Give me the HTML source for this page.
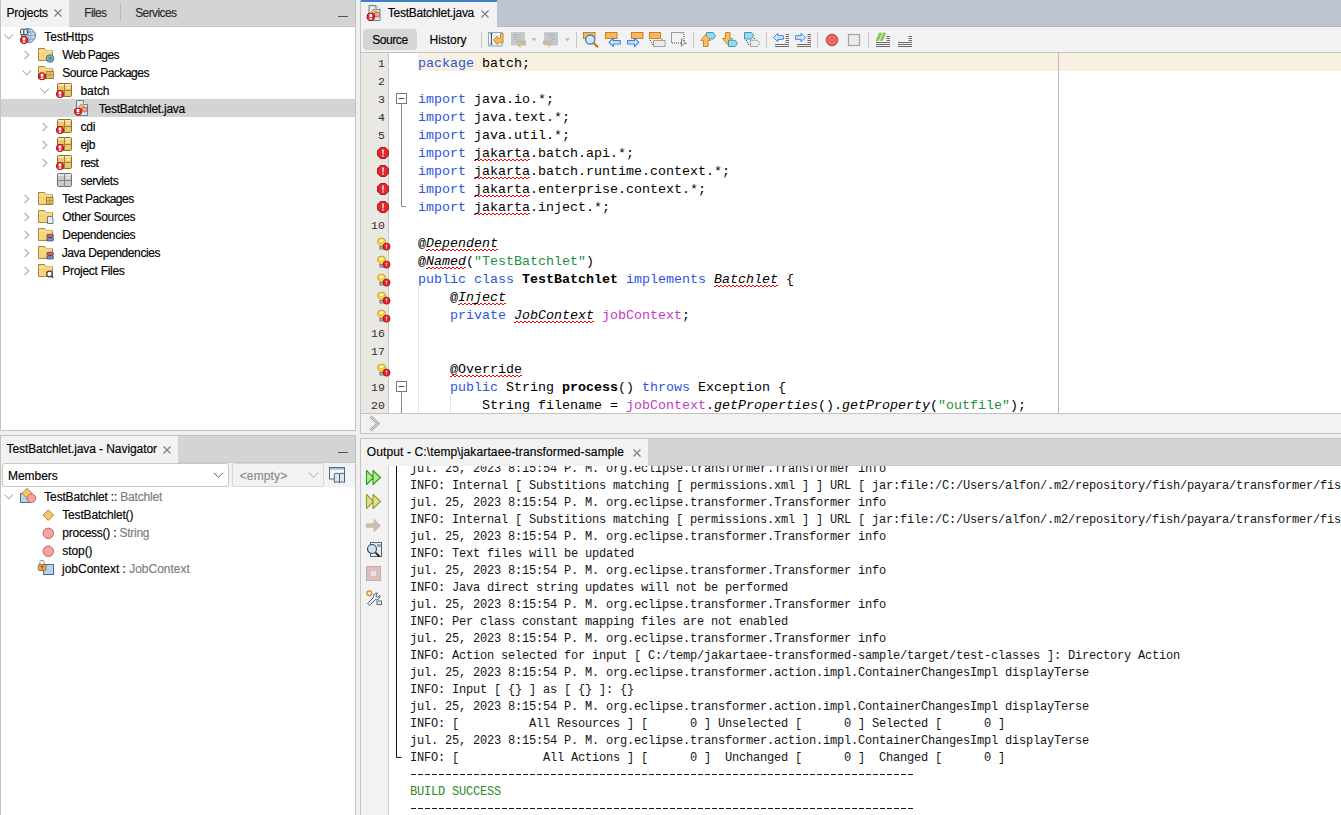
<!DOCTYPE html><html><head><meta charset="utf-8"><title>NetBeans</title><style>
*{box-sizing:border-box}
html,body{margin:0;padding:0}
body{width:1341px;height:815px;overflow:hidden;position:relative;background:#efefef;font-family:"Liberation Sans",sans-serif;font-size:12px;color:#000}
.a{position:absolute}
.t{position:absolute;white-space:pre}
.ss{-webkit-text-stroke:0.15px currentColor}
.k{color:#2c55e0}
.s{color:#1a9040}
.f{color:#c03cc0}
.i{font-style:italic}
.b{font-weight:bold}
.g{color:#7c7c7c}
.wv{position:absolute;height:2px;background-image:linear-gradient(to right,transparent 2px,#f00 2px),linear-gradient(to right,#f00 2px,transparent 2px);background-size:4px 1px,4px 1px;background-position:0 0,0 1px;background-repeat:repeat-x}
</style></head><body>

<svg width="0" height="0" style="position:absolute"><defs>
<symbol id="errb" viewBox="0 0 8 8"><path d="M2.4 0.4h3.2l2 2v3.2l-2 2H2.4l-2-2V2.4z" fill="#e0262c" stroke="#8e0a0e" stroke-width="0.8"/><rect x="2.7" y="1.5" width="2.6" height="3" fill="#fff"/><rect x="2.7" y="5.3" width="2.6" height="1.3" fill="#fff"/></symbol>
<symbol id="folder" viewBox="0 0 16 13"><path d="M0.5 0.5h6l1.5 2h6.5v10h-14z" fill="#f7d57c" stroke="#a98a3a" stroke-width="1"/><path d="M1 3h13.5" stroke="#fbe6a6" stroke-width="1"/></symbol>
<symbol id="pkg" viewBox="0 0 15 14"><rect x="0.5" y="0.5" width="14" height="13" rx="1.2" fill="#ecc66c" stroke="#8f6f28"/><path d="M7.5 0.5v13M0.5 7.5h14" stroke="#a4843a"/><rect x="1" y="1" width="6" height="2" fill="#f8e4ab"/><rect x="8" y="1" width="6" height="2" fill="#f8e4ab"/><rect x="9.5" y="3.8" width="3" height="1.6" fill="#fff6d8"/></symbol>
<symbol id="pkgg" viewBox="0 0 15 14"><rect x="0.5" y="0.5" width="14" height="13" rx="1.2" fill="#cacaca" stroke="#6f6f6f"/><path d="M7.5 0.5v13M0.5 7.5h14" stroke="#858585"/><rect x="1" y="1" width="6" height="2" fill="#e4e4e4"/><rect x="8" y="1" width="6" height="2" fill="#e4e4e4"/><rect x="9.5" y="3.8" width="3" height="1.6" fill="#f6f6f6"/></symbol>
<symbol id="jfile" viewBox="0 0 16 16"><path d="M2.5 0.5h7l4 4v11h-11z" fill="#dfe7ef" stroke="#6f7e8c"/><path d="M9.5 0.5v4h4" fill="#fff" stroke="#6f7e8c"/><path d="M7.5 4l2.5 2.5-2.5 2.5-2.5-2.5z" fill="#f1c35a" stroke="#a67b1e" stroke-width="0.8"/><circle cx="10.5" cy="9.5" r="2.6" fill="#f3a0a0" stroke="#c85050" stroke-width="0.8"/></symbol>
<symbol id="chevr" viewBox="0 0 6 10"><path d="M0.6 0.8L4.8 5L0.6 9.2" fill="none" stroke="#a9a9a9" stroke-width="1.1"/></symbol>
<symbol id="chevd" viewBox="0 0 10 6"><path d="M0.4 0.5L4.75 4.85L9.1 0.5" fill="none" stroke="#a9a9a9" stroke-width="1.05"/></symbol>
<symbol id="gerr" viewBox="0 0 12 12"><path d="M3.6 0.5h4.8l3.1 3.1v4.8l-3.1 3.1H3.6L0.5 8.4V3.6z" fill="#dd2a2f" stroke="#a31116" stroke-width="0.9"/><path d="M5.2 2.4h1.6l-0.3 5h-1z" fill="#fff"/><rect x="5.3" y="8.3" width="1.4" height="1.3" fill="#fff"/></symbol>
<symbol id="bulb" viewBox="0 0 14 14"><path d="M4.5 1a4 4 0 0 1 4 4c0 1.5-1 2.3-1.4 3.3v1.5H2.9V8.3C2.5 7.3 0.5 6.5 0.5 5a4 4 0 0 1 4-4z" fill="#f5d23c" stroke="#b8961a" stroke-width="0.8"/><ellipse cx="4.5" cy="3.8" rx="2" ry="1.3" fill="#fff7c8"/><rect x="3" y="9.8" width="3.2" height="2.2" fill="#dfe4ea" stroke="#3f5672" stroke-width="0.8"/><circle cx="9.5" cy="9.6" r="3.6" fill="#d9252a" stroke="#a51216" stroke-width="0.7"/><path d="M8.2 7.8h2.6l-0.9 1.4v2.3h-0.8V9.2z" fill="#f7c8c8"/></symbol>
</defs></svg>

<div class="a" style="left:0px;top:0px;width:356px;height:431px;background:#fff;"></div>
<div class="a" style="left:0px;top:0px;width:1px;height:431px;background:#c3c3c3;"></div>
<div class="a" style="left:355px;top:0px;width:1px;height:431px;background:#c3c3c3;"></div>
<div class="a" style="left:0px;top:430px;width:356px;height:1px;background:#c3c3c3;"></div>
<div class="a" style="left:1px;top:0px;width:354px;height:27px;background:#d4d4d4;"></div>
<div class="a" style="left:69px;top:26px;width:286px;height:1px;background:#c9c9c9;"></div>
<div class="a" style="left:1px;top:0px;width:68px;height:27px;background:#f2f2f2;"></div>
<div class="t" style="left:6.40px;top:3.54px;font-size:12px;line-height:18px;color:#000;font-family:'Liberation Sans',sans-serif;letter-spacing:-0.236px;-webkit-text-stroke:0.15px currentColor">Projects</div>
<svg class="a" style="left:54px;top:9px;overflow:visible" width="8" height="8" viewBox="0 0 8 8"><path d="M0.5 0.5L7.5 7.5M7.5 0.5L0.5 7.5" stroke="#7e7e7e" stroke-width="1.15"/></svg>
<div class="t" style="left:84.20px;top:3.54px;font-size:12px;line-height:18px;color:#2a2a2a;font-family:'Liberation Sans',sans-serif;letter-spacing:-0.635px;-webkit-text-stroke:0.15px currentColor">Files</div>
<div class="a" style="left:120px;top:3px;width:1px;height:18px;background:#bcbcbc;"></div>
<div class="t" style="left:135.20px;top:3.54px;font-size:12px;line-height:18px;color:#2a2a2a;font-family:'Liberation Sans',sans-serif;letter-spacing:-0.601px;-webkit-text-stroke:0.15px currentColor">Services</div>
<div class="a" style="left:338px;top:16px;width:10px;height:1px;background:#555;"></div>
<svg class="a" style="left:4px;top:34px;overflow:visible" width="10" height="6" viewBox="0 0 10 6"><use href="#chevd" x="0" y="0" width="10" height="6"/></svg>
<svg class="a" style="left:20px;top:28px;overflow:visible" width="17" height="17" viewBox="0 0 17 17"><circle cx="8.4" cy="7.6" r="7.1" fill="#c2daee" stroke="#4f7090" stroke-width="0.9"/><path d="M1.6 7.6h13.6M8.4 0.6v14M2.6 4h11.6M2.6 11.2h11.6M8.4 0.6c-3.2 3-3.2 11 0 14M8.4 0.6c3.2 3 3.2 11 0 14" stroke="#7d9db8" stroke-width="0.8" fill="none"/><rect x="0.6" y="1" width="3.4" height="5.8" rx="1.5" fill="#f4f8fc" stroke="#1e1e1e" stroke-width="0.9"/><rect x="3.9" y="1" width="3.4" height="5.8" rx="1.5" fill="#f4f8fc" stroke="#1e1e1e" stroke-width="0.9"/><use href="#errb" x="0" y="8" width="8" height="8"/></svg>
<div class="t" style="left:44.30px;top:27.54px;font-size:12px;line-height:18px;color:#000;font-family:'Liberation Sans',sans-serif;letter-spacing:-0.115px;-webkit-text-stroke:0.15px currentColor">TestHttps</div>
<svg class="a" style="left:24px;top:50px;overflow:visible" width="6" height="10" viewBox="0 0 6 10"><use href="#chevr" x="0" y="0" width="6" height="10"/></svg>
<svg class="a" style="left:38px;top:48px;overflow:visible" width="17" height="16" viewBox="0 0 17 16"><use href="#folder" x="0" y="0" width="16" height="13"/><circle cx="12" cy="10.5" r="3.8" fill="#7fa8cf" stroke="#3d6690" stroke-width="0.8"/><path d="M10.8 8.5l3.2 1.6-2.2 3z" fill="#33a033"/></svg>
<div class="t" style="left:62.30px;top:45.54px;font-size:12px;line-height:18px;color:#000;font-family:'Liberation Sans',sans-serif;letter-spacing:-0.577px;-webkit-text-stroke:0.15px currentColor">Web Pages</div>
<svg class="a" style="left:22px;top:70px;overflow:visible" width="10" height="6" viewBox="0 0 10 6"><use href="#chevd" x="0" y="0" width="10" height="6"/></svg>
<svg class="a" style="left:38px;top:66px;overflow:visible" width="17" height="16" viewBox="0 0 17 16"><use href="#folder" x="0" y="0" width="16" height="13"/><rect x="8.5" y="5.5" width="7" height="7" fill="#e8c36a" stroke="#94742c" stroke-width="0.8"/><path d="M12 5.5v7M8.5 9h7" stroke="#a5843a" stroke-width="0.7"/><use href="#errb" x="0" y="6.3" width="8" height="8"/></svg>
<div class="t" style="left:62.30px;top:63.54px;font-size:12px;line-height:18px;color:#000;font-family:'Liberation Sans',sans-serif;letter-spacing:-0.490px;-webkit-text-stroke:0.15px currentColor">Source Packages</div>
<svg class="a" style="left:40px;top:88px;overflow:visible" width="10" height="6" viewBox="0 0 10 6"><use href="#chevd" x="0" y="0" width="10" height="6"/></svg>
<svg class="a" style="left:57px;top:83px;overflow:visible" width="16" height="16" viewBox="0 0 16 16"><use href="#pkg" x="0" y="0" width="15" height="14"/><use href="#errb" x="-1" y="7" width="8" height="8"/></svg>
<div class="t" style="left:80.50px;top:81.54px;font-size:12px;line-height:18px;color:#000;font-family:'Liberation Sans',sans-serif;letter-spacing:-0.090px;-webkit-text-stroke:0.15px currentColor">batch</div>
<div class="a" style="left:1px;top:99px;width:354px;height:18px;background:#d4d4d4;"></div>
<svg class="a" style="left:74px;top:100px;overflow:visible" width="16" height="16" viewBox="0 0 16 16"><use href="#jfile" x="0" y="0" width="16" height="16"/><use href="#errb" x="0" y="7.5" width="8" height="8"/></svg>
<div class="t" style="left:98.80px;top:99.54px;font-size:12px;line-height:18px;color:#000;font-family:'Liberation Sans',sans-serif;letter-spacing:-0.270px;-webkit-text-stroke:0.15px currentColor">TestBatchlet.java</div>
<svg class="a" style="left:42px;top:122px;overflow:visible" width="6" height="10" viewBox="0 0 6 10"><use href="#chevr" x="0" y="0" width="6" height="10"/></svg>
<svg class="a" style="left:57px;top:119px;overflow:visible" width="16" height="16" viewBox="0 0 16 16"><use href="#pkg" x="0" y="0" width="15" height="14"/><use href="#errb" x="-1" y="7" width="8" height="8"/></svg>
<div class="t" style="left:80.50px;top:117.54px;font-size:12px;line-height:18px;color:#000;font-family:'Liberation Sans',sans-serif;letter-spacing:-0.270px;-webkit-text-stroke:0.15px currentColor">cdi</div>
<svg class="a" style="left:42px;top:140px;overflow:visible" width="6" height="10" viewBox="0 0 6 10"><use href="#chevr" x="0" y="0" width="6" height="10"/></svg>
<svg class="a" style="left:57px;top:137px;overflow:visible" width="16" height="16" viewBox="0 0 16 16"><use href="#pkg" x="0" y="0" width="15" height="14"/><use href="#errb" x="-1" y="7" width="8" height="8"/></svg>
<div class="t" style="left:80.50px;top:135.54px;font-size:12px;line-height:18px;color:#000;font-family:'Liberation Sans',sans-serif;letter-spacing:-0.605px;-webkit-text-stroke:0.15px currentColor">ejb</div>
<svg class="a" style="left:42px;top:158px;overflow:visible" width="6" height="10" viewBox="0 0 6 10"><use href="#chevr" x="0" y="0" width="6" height="10"/></svg>
<svg class="a" style="left:57px;top:155px;overflow:visible" width="16" height="16" viewBox="0 0 16 16"><use href="#pkg" x="0" y="0" width="15" height="14"/><use href="#errb" x="-1" y="7" width="8" height="8"/></svg>
<div class="t" style="left:80.50px;top:153.54px;font-size:12px;line-height:18px;color:#000;font-family:'Liberation Sans',sans-serif;letter-spacing:-0.567px;-webkit-text-stroke:0.15px currentColor">rest</div>
<svg class="a" style="left:57px;top:172.5px;overflow:visible" width="16" height="16" viewBox="0 0 16 16"><use href="#pkgg" x="0" y="0" width="15" height="14"/></svg>
<div class="t" style="left:80.50px;top:171.54px;font-size:12px;line-height:18px;color:#000;font-family:'Liberation Sans',sans-serif;letter-spacing:-0.449px;-webkit-text-stroke:0.15px currentColor">servlets</div>
<svg class="a" style="left:24px;top:194px;overflow:visible" width="6" height="10" viewBox="0 0 6 10"><use href="#chevr" x="0" y="0" width="6" height="10"/></svg>
<svg class="a" style="left:38px;top:192px;overflow:visible" width="17" height="16" viewBox="0 0 17 16"><use href="#folder" x="0" y="0" width="16" height="13"/><rect x="8.5" y="5.5" width="6.5" height="6.5" fill="#e8c36a" stroke="#94742c" stroke-width="0.8"/><path d="M11.75 5.5v6.5M8.5 8.75h6.5" stroke="#a5843a" stroke-width="0.7"/></svg>
<div class="t" style="left:62.30px;top:189.54px;font-size:12px;line-height:18px;color:#000;font-family:'Liberation Sans',sans-serif;letter-spacing:-0.512px;-webkit-text-stroke:0.15px currentColor">Test Packages</div>
<svg class="a" style="left:24px;top:212px;overflow:visible" width="6" height="10" viewBox="0 0 6 10"><use href="#chevr" x="0" y="0" width="6" height="10"/></svg>
<svg class="a" style="left:38px;top:210px;overflow:visible" width="17" height="16" viewBox="0 0 17 16"><use href="#folder" x="0" y="0" width="16" height="13"/><path d="M9.5 6.5h3.8l1.7 1.7v5.3h-5.5z" fill="#e6ecf2" stroke="#5d6f82" stroke-width="0.9"/></svg>
<div class="t" style="left:62.30px;top:207.54px;font-size:12px;line-height:18px;color:#000;font-family:'Liberation Sans',sans-serif;letter-spacing:-0.339px;-webkit-text-stroke:0.15px currentColor">Other Sources</div>
<svg class="a" style="left:24px;top:230px;overflow:visible" width="6" height="10" viewBox="0 0 6 10"><use href="#chevr" x="0" y="0" width="6" height="10"/></svg>
<svg class="a" style="left:38px;top:228px;overflow:visible" width="17" height="16" viewBox="0 0 17 16"><use href="#folder" x="0" y="0" width="16" height="13"/><rect x="8.8" y="6.3" width="6.7" height="3.2" rx="1.2" fill="#b56a6a" stroke="#6a3030" stroke-width="0.7"/><rect x="8.8" y="9.8" width="6.7" height="3.2" rx="1.2" fill="#7c8fc0" stroke="#2f3f78" stroke-width="0.7"/></svg>
<div class="t" style="left:62.30px;top:225.54px;font-size:12px;line-height:18px;color:#000;font-family:'Liberation Sans',sans-serif;letter-spacing:-0.311px;-webkit-text-stroke:0.15px currentColor">Dependencies</div>
<svg class="a" style="left:24px;top:248px;overflow:visible" width="6" height="10" viewBox="0 0 6 10"><use href="#chevr" x="0" y="0" width="6" height="10"/></svg>
<svg class="a" style="left:38px;top:246px;overflow:visible" width="17" height="16" viewBox="0 0 17 16"><use href="#folder" x="0" y="0" width="16" height="13"/><rect x="8.8" y="6.3" width="6.7" height="3.2" rx="1.2" fill="#b56a6a" stroke="#6a3030" stroke-width="0.7"/><rect x="8.8" y="9.8" width="6.7" height="3.2" rx="1.2" fill="#7c8fc0" stroke="#2f3f78" stroke-width="0.7"/></svg>
<div class="t" style="left:61.70px;top:243.54px;font-size:12px;line-height:18px;color:#000;font-family:'Liberation Sans',sans-serif;letter-spacing:-0.413px;-webkit-text-stroke:0.15px currentColor">Java Dependencies</div>
<svg class="a" style="left:24px;top:266px;overflow:visible" width="6" height="10" viewBox="0 0 6 10"><use href="#chevr" x="0" y="0" width="6" height="10"/></svg>
<svg class="a" style="left:38px;top:264px;overflow:visible" width="17" height="16" viewBox="0 0 17 16"><use href="#folder" x="0" y="0" width="16" height="13"/><circle cx="11.5" cy="10" r="2.8" fill="#fff" stroke="#444" stroke-width="1.3"/><path d="M13 11.5l2.2 2.2" stroke="#444" stroke-width="1.5"/></svg>
<div class="t" style="left:62.30px;top:261.54px;font-size:12px;line-height:18px;color:#000;font-family:'Liberation Sans',sans-serif;letter-spacing:-0.293px;-webkit-text-stroke:0.15px currentColor">Project Files</div>
<div class="a" style="left:0px;top:435px;width:356px;height:380px;background:#fff;"></div>
<div class="a" style="left:0px;top:435px;width:1px;height:380px;background:#c3c3c3;"></div>
<div class="a" style="left:355px;top:435px;width:1px;height:380px;background:#c3c3c3;"></div>
<div class="a" style="left:0px;top:435px;width:356px;height:1px;background:#c3c3c3;"></div>
<div class="a" style="left:1px;top:436px;width:354px;height:27px;background:#d4d4d4;"></div>
<div class="a" style="left:178px;top:462px;width:177px;height:1px;background:#c9c9c9;"></div>
<div class="a" style="left:1px;top:436px;width:177px;height:27px;background:#f2f2f2;"></div>
<div class="t" style="left:6.50px;top:439.84px;font-size:12px;line-height:18px;color:#000;font-family:'Liberation Sans',sans-serif;letter-spacing:-0.080px;-webkit-text-stroke:0.15px currentColor">TestBatchlet.java - Navigator</div>
<svg class="a" style="left:163px;top:445.5px;overflow:visible" width="8" height="8" viewBox="0 0 8 8"><path d="M0.5 0.5L7.5 7.5M7.5 0.5L0.5 7.5" stroke="#7e7e7e" stroke-width="1.15"/></svg>
<div class="a" style="left:338px;top:452px;width:10px;height:1px;background:#555;"></div>
<div class="a" style="left:1px;top:463px;width:354px;height:24px;background:#f2f2f2;"></div>
<div class="a" style="left:2px;top:463px;width:227px;height:24px;background:#fff;border:1px solid #c9c9c9;border-radius:3px"></div>
<div class="t" style="left:8.00px;top:466.84px;font-size:12px;line-height:18px;color:#000;font-family:'Liberation Sans',sans-serif;letter-spacing:-0.052px;-webkit-text-stroke:0.15px currentColor">Members</div>
<svg class="a" style="left:213px;top:472px;overflow:visible" width="11" height="6" viewBox="0 0 11 6"><path d="M0.8 0.8L5.5 5.2L10.2 0.8" fill="none" stroke="#606060" stroke-width="1"/></svg>
<div class="a" style="left:232px;top:463px;width:92px;height:24px;background:#f2f2f2;border:1px solid #d6d6d6;border-radius:3px"></div>
<div class="t" style="left:239.70px;top:466.84px;font-size:12px;line-height:18px;color:#8a8a8a;font-family:'Liberation Sans',sans-serif;letter-spacing:0.135px;-webkit-text-stroke:0.15px currentColor">&lt;empty&gt;</div>
<svg class="a" style="left:308px;top:472px;overflow:visible" width="11" height="6" viewBox="0 0 11 6"><path d="M0.8 0.8L5.5 5.2L10.2 0.8" fill="none" stroke="#a8a8a8" stroke-width="1"/></svg>
<svg class="a" style="left:329px;top:466px;overflow:visible" width="17" height="17" viewBox="0 0 17 17"><rect x="0.5" y="1.5" width="15" height="11.5" fill="#f4f7fa" stroke="#4e6a88"/><rect x="1" y="2" width="14" height="1.8" fill="#a9bed3"/><path d="M5.3 7.8q2.6-1.2 5.2 0v8.6q-2.6-1.2-5.2 0z" fill="#dde8f2" stroke="#3c5878" stroke-width="0.9"/><path d="M10.5 7.8q2.6-1.2 5 0v8.6q-2.4-1.2-5 0z" fill="#dde8f2" stroke="#3c5878" stroke-width="0.9"/></svg>
<svg class="a" style="left:4px;top:494px;overflow:visible" width="10" height="6" viewBox="0 0 10 6"><use href="#chevd" x="0" y="0" width="10" height="6"/></svg>
<svg class="a" style="left:19px;top:487px;overflow:visible" width="18" height="17" viewBox="0 0 18 17"><rect x="1.5" y="6.5" width="9" height="9" fill="#b9d3ec" stroke="#466c93"/><path d="M8 1.3l5 5-5 5-5-5z" fill="#f0c86a" stroke="#a67b1e" stroke-width="0.9"/><circle cx="12.3" cy="11.3" r="4.3" fill="#f5a3a3" stroke="#c35050" stroke-width="0.9"/></svg>
<div class="t" style="left:44.30px;top:487.54px;font-size:12px;line-height:18px;color:#000;font-family:'Liberation Sans',sans-serif;letter-spacing:-0.172px;-webkit-text-stroke:0.15px currentColor">TestBatchlet :: <span class="g">Batchlet</span></div>
<svg class="a" style="left:42px;top:509px;overflow:visible" width="13" height="12" viewBox="0 0 13 12"><path d="M6.3 0.8l5.3 5.3-5.3 5.3L1 6.1z" fill="#f0c86a" stroke="#a67b1e" stroke-width="0.9"/></svg>
<div class="t" style="left:62.30px;top:505.54px;font-size:12px;line-height:18px;color:#000;font-family:'Liberation Sans',sans-serif;letter-spacing:-0.174px;-webkit-text-stroke:0.15px currentColor">TestBatchlet()</div>
<svg class="a" style="left:42px;top:527px;overflow:visible" width="13" height="12" viewBox="0 0 13 12"><circle cx="6.3" cy="6.3" r="5.2" fill="#f5a3a3" stroke="#c35050" stroke-width="0.9"/></svg>
<div class="t" style="left:62.30px;top:523.54px;font-size:12px;line-height:18px;color:#000;font-family:'Liberation Sans',sans-serif;letter-spacing:-0.245px;-webkit-text-stroke:0.15px currentColor">process() : <span class="g">String</span></div>
<svg class="a" style="left:42px;top:545px;overflow:visible" width="13" height="12" viewBox="0 0 13 12"><circle cx="6.3" cy="6.3" r="5.2" fill="#f5a3a3" stroke="#c35050" stroke-width="0.9"/></svg>
<div class="t" style="left:62.30px;top:541.54px;font-size:12px;line-height:18px;color:#000;font-family:'Liberation Sans',sans-serif;letter-spacing:-0.074px;-webkit-text-stroke:0.15px currentColor">stop()</div>
<svg class="a" style="left:37px;top:559px;overflow:visible" width="18" height="17" viewBox="0 0 18 17"><rect x="6.5" y="5.5" width="10" height="10" fill="#b9d3ec" stroke="#466c93"/><path d="M2.8 5.5V3.5a2.2 2.2 0 0 1 4.4 0V5.5" fill="none" stroke="#8a8a8a" stroke-width="1"/><rect x="1.3" y="5.5" width="7.6" height="6" rx="1" fill="#e8a860" stroke="#9b5a16" stroke-width="0.8"/><path d="M3.5 7.5h3.2M5.1 7.5v2.8" stroke="#7a3a00" stroke-width="0.8"/></svg>
<div class="t" style="left:62.00px;top:559.54px;font-size:12px;line-height:18px;color:#000;font-family:'Liberation Sans',sans-serif;letter-spacing:-0.013px;-webkit-text-stroke:0.15px currentColor">jobContext : <span class="g">JobContext</span></div>
<div class="a" style="left:360px;top:0px;width:981px;height:434px;background:#fff;"></div>
<div class="a" style="left:360px;top:0px;width:1px;height:434px;background:#c3c3c3;"></div>
<div class="a" style="left:361px;top:0px;width:980px;height:27px;background:#bdc6d0;"></div>
<div class="a" style="left:497px;top:26px;width:844px;height:1px;background:#b2bac2;"></div>
<div class="a" style="left:361px;top:0px;width:136px;height:27px;background:#f2f2f2;"></div>
<div class="a" style="left:361px;top:0px;width:136px;height:2px;background:#3d7fc8;"></div>
<svg class="a" style="left:366px;top:5px;overflow:visible" width="17" height="17" viewBox="0 0 17 17"><use href="#jfile" x="0.5" y="0" width="16" height="16"/><use href="#errb" x="0.5" y="7.5" width="8.5" height="8.5"/></svg>
<div class="t" style="left:387.80px;top:3.54px;font-size:12px;line-height:18px;color:#000;font-family:'Liberation Sans',sans-serif;letter-spacing:-0.264px;-webkit-text-stroke:0.15px currentColor">TestBatchlet.java</div>
<svg class="a" style="left:481px;top:10px;overflow:visible" width="8" height="8" viewBox="0 0 8 8"><path d="M0.5 0.5L7.5 7.5M7.5 0.5L0.5 7.5" stroke="#7e7e7e" stroke-width="1.15"/></svg>
<div class="a" style="left:361px;top:27px;width:980px;height:25px;background:#f2f2f2;"></div>
<div class="a" style="left:361px;top:52px;width:980px;height:1px;background:#c3c3c3;"></div>
<div class="a" style="left:363px;top:29px;width:54px;height:21px;background:#d5d5d5;border-radius:4px"></div>
<div class="t" style="left:372.30px;top:31.24px;font-size:12px;line-height:18px;color:#000;font-family:'Liberation Sans',sans-serif;letter-spacing:-0.444px;-webkit-text-stroke:0.15px currentColor">Source</div>
<div class="t" style="left:429.60px;top:31.24px;font-size:12px;line-height:18px;color:#000;font-family:'Liberation Sans',sans-serif;letter-spacing:-0.057px;-webkit-text-stroke:0.15px currentColor">History</div>
<div class="a" style="left:481px;top:32px;width:1px;height:16px;background:#c8c8c8;"></div>
<div class="a" style="left:576px;top:32px;width:1px;height:16px;background:#c8c8c8;"></div>
<div class="a" style="left:693px;top:32px;width:1px;height:16px;background:#c8c8c8;"></div>
<div class="a" style="left:766px;top:32px;width:1px;height:16px;background:#c8c8c8;"></div>
<div class="a" style="left:817px;top:32px;width:1px;height:16px;background:#c8c8c8;"></div>
<div class="a" style="left:868px;top:32px;width:1px;height:16px;background:#c8c8c8;"></div>
<svg class="a" style="left:487px;top:31px;overflow:visible" width="19" height="17" viewBox="0 0 19 17"><rect x="1.5" y="1.5" width="13.5" height="13.5" fill="#eef4fa" stroke="#86a8c8"/><path d="M3.3 2.8h2.2M4.4 2.8v10.4M3.3 13.2h2.2" stroke="#333" stroke-width="0.9"/><path d="M6.3 9l4-4v2.3h3.2V2.5h2.6V11.8h-5.8v1.9z" fill="#f6b85a" stroke="#c57c1c" stroke-width="0.8" stroke-linejoin="round"/></svg>
<svg class="a" style="left:510px;top:31px;overflow:visible" width="28" height="17" viewBox="0 0 28 17"><rect x="1" y="1" width="14" height="13.5" fill="#c5c8cc"/><path d="M3.5 3.5h8M3.5 6h5M3.5 8.5h3" stroke="#aeb1b5"/><path d="M5.5 11.5l5-5v3h5.5v5H10.5v3z" fill="#cbbba4"/><path d="M21.5 7.3h5l-2.5 3z" fill="#b8b8b8"/></svg>
<svg class="a" style="left:542px;top:31px;overflow:visible" width="29" height="17" viewBox="0 0 29 17"><rect x="2" y="1" width="14" height="13.5" fill="#c5c8cc"/><path d="M5 3.5h8M8 6h5M10 8.5h3" stroke="#aeb1b5"/><path d="M1 9.5h5.5v-3l5 5-5 5v-3H1z" fill="#cbbba4"/><path d="M23 7.3h5l-2.5 3z" fill="#b8b8b8"/></svg>
<svg class="a" style="left:582px;top:31px;overflow:visible" width="18" height="17" viewBox="0 0 18 17"><rect x="1.5" y="1.5" width="11.5" height="6" fill="#f7b75c" stroke="#c27a1e" stroke-width="0.9"/><circle cx="8.2" cy="8.6" r="4.6" fill="#d3e6f8" stroke="#3a7bd0" stroke-width="1.3"/><path d="M11.6 12l3.8 3.6" stroke="#c27a1e" stroke-width="2.2" stroke-linecap="round"/></svg>
<svg class="a" style="left:604px;top:31px;overflow:visible" width="18" height="17" viewBox="0 0 18 17"><rect x="1.5" y="1.5" width="11.5" height="6" fill="#f7b75c" stroke="#c27a1e" stroke-width="0.9"/><path d="M5 11.3l4.3-4.3v2.6h7v3.4h-7v2.6z" fill="#d3e8fb" stroke="#3a87df" stroke-width="1.1" stroke-linejoin="round"/></svg>
<svg class="a" style="left:626px;top:31px;overflow:visible" width="18" height="17" viewBox="0 0 18 17"><rect x="5.5" y="1.5" width="11.5" height="6" fill="#f7b75c" stroke="#c27a1e" stroke-width="0.9"/><path d="M1.5 9.6h7V7l4.3 4.3-4.3 4.3v-2.6h-7z" fill="#d3e8fb" stroke="#3a87df" stroke-width="1.1" stroke-linejoin="round"/></svg>
<svg class="a" style="left:648px;top:31px;overflow:visible" width="19" height="17" viewBox="0 0 19 17"><rect x="1.5" y="1.5" width="11" height="6" fill="#f7b75c" stroke="#c27a1e" stroke-width="0.9"/><rect x="5.5" y="9.5" width="11.5" height="6" fill="#ececec" stroke="#9a9a9a" stroke-width="0.9"/><circle cx="2.5" cy="9.5" r="0.55" fill="#333"/><circle cx="3.5" cy="11.5" r="0.55" fill="#333"/><circle cx="4.5" cy="13.5" r="0.55" fill="#333"/><circle cx="14" cy="8.3" r="0.55" fill="#333"/></svg>
<svg class="a" style="left:670px;top:31px;overflow:visible" width="18" height="17" viewBox="0 0 18 17"><rect x="1.5" y="1.5" width="12.5" height="10.5" fill="none" stroke="#444" stroke-width="1" stroke-dasharray="1 1"/><path d="M11.5 8l5 4.5-3 0.3-2 2.4z" fill="#f2f2f2" stroke="#777" stroke-width="0.9" stroke-linejoin="round"/></svg>
<svg class="a" style="left:699px;top:31px;overflow:visible" width="18" height="17" viewBox="0 0 18 17"><path d="M7.5 1.5h6.8l2.2 3.2-2.2 3.3H7.5z" fill="#8fdcef" stroke="#3590a8" stroke-width="0.9"/><path d="M6.5 3.5l5 6H9v6H4.5v-6H1.8z" fill="#f9bf66" stroke="#c57c1c" stroke-width="0.9" stroke-linejoin="round"/></svg>
<svg class="a" style="left:721px;top:31px;overflow:visible" width="18" height="17" viewBox="0 0 18 17"><path d="M4.5 1.5H9v6h2.5l-5 6-5-6h3z" fill="#f9bf66" stroke="#c57c1c" stroke-width="0.9" stroke-linejoin="round"/><path d="M7.5 9.3h6.8l2.2 3.1-2.2 3.1H7.5z" fill="#8fdcef" stroke="#3590a8" stroke-width="0.9"/></svg>
<svg class="a" style="left:743px;top:31px;overflow:visible" width="18" height="17" viewBox="0 0 18 17"><path d="M1.5 1.5h7l2.2 3.2-2.2 3.3h-7z" fill="#8fdcef" stroke="#3590a8" stroke-width="0.9"/><path d="M7.5 9.3h7l2.2 3.1-2.2 3.1h-7z" fill="#ececec" stroke="#a0a0a0" stroke-width="0.9"/><circle cx="3.5" cy="9.5" r="0.6" fill="#222"/><circle cx="4.5" cy="11.5" r="0.6" fill="#222"/><circle cx="5.5" cy="13.5" r="0.6" fill="#222"/><circle cx="11.5" cy="7.5" r="0.6" fill="#222"/></svg>
<svg class="a" style="left:772px;top:31px;overflow:visible" width="18" height="17" viewBox="0 0 18 17"><path d="M1.5 6.5l4.3-4.3v2.5h5.5v3.6H5.8v2.5z" fill="#d3e8fb" stroke="#3a87df" stroke-width="1" stroke-linejoin="round"/><path d="M13.5 3.5h3.5M13.5 5.5h3.5M13.5 7.5h3.5M13.5 9.5h3.5M13.5 11.5h3.5M3 13.5h14M3 15.5h14" stroke="#6a6a6a" stroke-width="1"/></svg>
<svg class="a" style="left:794px;top:31px;overflow:visible" width="18" height="17" viewBox="0 0 18 17"><path d="M1.5 4.7h5.5V2.2l4.3 4.3-4.3 4.3V8.3H1.5z" fill="#d3e8fb" stroke="#3a87df" stroke-width="1" stroke-linejoin="round"/><path d="M13.5 3.5h3.5M13.5 5.5h3.5M13.5 7.5h3.5M13.5 9.5h3.5M13.5 11.5h3.5M3 13.5h14M3 15.5h14" stroke="#6a6a6a" stroke-width="1"/></svg>
<svg class="a" style="left:825px;top:33px;overflow:visible" width="14" height="14" viewBox="0 0 14 14"><circle cx="7" cy="7" r="5.8" fill="#e86a62" stroke="#b2443c" stroke-width="1"/></svg>
<svg class="a" style="left:847px;top:33px;overflow:visible" width="14" height="14" viewBox="0 0 14 14"><rect x="1.5" y="1.5" width="11" height="11" fill="#ececec" stroke="#a4a4a4" stroke-width="1.2"/></svg>
<svg class="a" style="left:875px;top:31px;overflow:visible" width="16" height="17" viewBox="0 0 16 17"><path d="M1.3 9.5l3-7.5h2.2l-3 7.5zM5.3 9.5l3-7.5h2.2l-3 7.5z" fill="#86d64f" stroke="#58a82c" stroke-width="0.5"/><path d="M11.5 5.5h3.5M11.5 7.5h3.5M11.5 9.5h3.5M1 11.5h14M1 13.5h14M1 15.5h14" stroke="#6a6a6a" stroke-width="1"/></svg>
<svg class="a" style="left:897px;top:31px;overflow:visible" width="16" height="17" viewBox="0 0 16 17"><path d="M11.5 5.5h3.5M11.5 7.5h3.5M11.5 9.5h3.5M1 11.5h14M1 13.5h14M1 15.5h14" stroke="#6a6a6a" stroke-width="1"/></svg>
<div class="a" style="left:361px;top:53px;width:27px;height:360px;background:#e9e8e2;"></div>
<div class="a" style="left:388px;top:53px;width:1px;height:360px;background:#c6c6c6;"></div>
<div class="a" style="left:418px;top:53px;width:923px;height:18px;background:#f8f1df;"></div>
<div class="a" style="left:1058px;top:53px;width:1px;height:360px;background:#d2abd1;"></div>
<svg class="a" style="left:395px;top:88px;overflow:visible" width="12" height="325" viewBox="0 0 12 325"><rect x="1.5" y="5.5" width="10" height="10" fill="#fff" stroke="#7a7a7a"/><path d="M3.5 10.5h6" stroke="#555"/><path d="M6.5 15.5V118.5H11" fill="none" stroke="#8a8a8a"/><rect x="1.5" y="293.5" width="10" height="10" fill="#fff" stroke="#7a7a7a"/><path d="M3.5 298.5h6" stroke="#555"/><path d="M6.5 303.5V330" fill="none" stroke="#8a8a8a"/></svg>
<svg class="a" style="left:418px;top:287px;overflow:visible" width="1" height="126" viewBox="0 0 1 126"><path d="M0.5 0V126" stroke="#c4c4c4" stroke-dasharray="1 1"/></svg>
<svg class="a" style="left:450px;top:395px;overflow:visible" width="1" height="18" viewBox="0 0 1 18"><path d="M0.5 0V18" stroke="#c4c4c4" stroke-dasharray="1 1"/></svg>
<div class="t" style="left:418.00px;top:55.45px;font-size:13.333px;line-height:18px;color:#000;font-family:'Liberation Mono',monospace;"><span class="k">package</span> batch;</div>
<div class="t" style="left:418.00px;top:91.45px;font-size:13.333px;line-height:18px;color:#000;font-family:'Liberation Mono',monospace;"><span class="k">import</span> java.io.*;</div>
<div class="t" style="left:418.00px;top:109.45px;font-size:13.333px;line-height:18px;color:#000;font-family:'Liberation Mono',monospace;"><span class="k">import</span> java.text.*;</div>
<div class="t" style="left:418.00px;top:127.45px;font-size:13.333px;line-height:18px;color:#000;font-family:'Liberation Mono',monospace;"><span class="k">import</span> java.util.*;</div>
<div class="wv" style="left:474px;top:159px;width:56px"></div>
<div class="t" style="left:418.00px;top:145.45px;font-size:13.333px;line-height:18px;color:#000;font-family:'Liberation Mono',monospace;"><span class="k">import</span> jakarta.batch.api.*;</div>
<div class="wv" style="left:474px;top:177px;width:56px"></div>
<div class="t" style="left:418.00px;top:163.45px;font-size:13.333px;line-height:18px;color:#000;font-family:'Liberation Mono',monospace;"><span class="k">import</span> jakarta.batch.runtime.context.*;</div>
<div class="wv" style="left:474px;top:195px;width:56px"></div>
<div class="t" style="left:418.00px;top:181.45px;font-size:13.333px;line-height:18px;color:#000;font-family:'Liberation Mono',monospace;"><span class="k">import</span> jakarta.enterprise.context.*;</div>
<div class="wv" style="left:474px;top:213px;width:56px"></div>
<div class="t" style="left:418.00px;top:199.45px;font-size:13.333px;line-height:18px;color:#000;font-family:'Liberation Mono',monospace;"><span class="k">import</span> jakarta.inject.*;</div>
<div class="wv" style="left:426px;top:249px;width:72px"></div>
<div class="t" style="left:418.00px;top:235.45px;font-size:13.333px;line-height:18px;color:#000;font-family:'Liberation Mono',monospace;">@<span class="i">Dependent</span></div>
<div class="wv" style="left:426px;top:267px;width:40px"></div>
<div class="t" style="left:418.00px;top:253.45px;font-size:13.333px;line-height:18px;color:#000;font-family:'Liberation Mono',monospace;">@<span class="i">Named</span>(<span class="s">&quot;TestBatchlet&quot;</span>)</div>
<div class="wv" style="left:714px;top:285px;width:64px"></div>
<div class="t" style="left:418.00px;top:271.45px;font-size:13.333px;line-height:18px;color:#000;font-family:'Liberation Mono',monospace;"><span class="k">public</span> <span class="k">class</span> <span class="b">TestBatchlet</span> <span class="k">implements</span> <span class="i">Batchlet</span> {</div>
<div class="wv" style="left:458px;top:303px;width:48px"></div>
<div class="t" style="left:418.00px;top:289.45px;font-size:13.333px;line-height:18px;color:#000;font-family:'Liberation Mono',monospace;">    @<span class="i">Inject</span></div>
<div class="wv" style="left:514px;top:321px;width:80px"></div>
<div class="t" style="left:418.00px;top:307.45px;font-size:13.333px;line-height:18px;color:#000;font-family:'Liberation Mono',monospace;">    <span class="k">private</span> <span class="i">JobContext</span> <span class="f">jobContext</span>;</div>
<div class="wv" style="left:450px;top:375px;width:72px"></div>
<div class="t" style="left:418.00px;top:361.45px;font-size:13.333px;line-height:18px;color:#000;font-family:'Liberation Mono',monospace;">    @Override</div>
<div class="t" style="left:418.00px;top:379.45px;font-size:13.333px;line-height:18px;color:#000;font-family:'Liberation Mono',monospace;">    <span class="k">public</span> String <span class="b">process</span>() <span class="k">throws</span> Exception {</div>
<div class="t" style="left:418.00px;top:397.45px;font-size:13.333px;line-height:18px;color:#000;font-family:'Liberation Mono',monospace;">        String filename = <span class="f">jobContext</span>.<span class="i">getProperties</span>().<span class="i">getProperty</span>(<span class="s">&quot;outfile&quot;</span>);</div>
<div class="t" style="left:378.00px;top:55.44px;font-size:11.5px;line-height:18px;color:#2e2e2e;font-family:'Liberation Mono',monospace;letter-spacing:0.099px">1</div>
<div class="t" style="left:378.00px;top:73.44px;font-size:11.5px;line-height:18px;color:#2e2e2e;font-family:'Liberation Mono',monospace;letter-spacing:0.099px">2</div>
<div class="t" style="left:378.00px;top:91.44px;font-size:11.5px;line-height:18px;color:#2e2e2e;font-family:'Liberation Mono',monospace;letter-spacing:0.099px">3</div>
<div class="t" style="left:378.00px;top:109.44px;font-size:11.5px;line-height:18px;color:#2e2e2e;font-family:'Liberation Mono',monospace;letter-spacing:0.099px">4</div>
<div class="t" style="left:378.00px;top:127.44px;font-size:11.5px;line-height:18px;color:#2e2e2e;font-family:'Liberation Mono',monospace;letter-spacing:0.099px">5</div>
<div class="t" style="left:371.00px;top:217.44px;font-size:11.5px;line-height:18px;color:#2e2e2e;font-family:'Liberation Mono',monospace;letter-spacing:0.099px">10</div>
<div class="t" style="left:371.00px;top:325.44px;font-size:11.5px;line-height:18px;color:#2e2e2e;font-family:'Liberation Mono',monospace;letter-spacing:0.099px">16</div>
<div class="t" style="left:371.00px;top:343.44px;font-size:11.5px;line-height:18px;color:#2e2e2e;font-family:'Liberation Mono',monospace;letter-spacing:0.099px">17</div>
<div class="t" style="left:371.00px;top:379.44px;font-size:11.5px;line-height:18px;color:#2e2e2e;font-family:'Liberation Mono',monospace;letter-spacing:0.099px">19</div>
<div class="t" style="left:371.00px;top:397.44px;font-size:11.5px;line-height:18px;color:#2e2e2e;font-family:'Liberation Mono',monospace;letter-spacing:0.099px">20</div>
<svg class="a" style="left:377px;top:147px;overflow:visible" width="12" height="12" viewBox="0 0 12 12"><use href="#gerr" x="0" y="0" width="12" height="12"/></svg>
<svg class="a" style="left:377px;top:165px;overflow:visible" width="12" height="12" viewBox="0 0 12 12"><use href="#gerr" x="0" y="0" width="12" height="12"/></svg>
<svg class="a" style="left:377px;top:183px;overflow:visible" width="12" height="12" viewBox="0 0 12 12"><use href="#gerr" x="0" y="0" width="12" height="12"/></svg>
<svg class="a" style="left:377px;top:201px;overflow:visible" width="12" height="12" viewBox="0 0 12 12"><use href="#gerr" x="0" y="0" width="12" height="12"/></svg>
<svg class="a" style="left:377px;top:236.5px;overflow:visible" width="14" height="14" viewBox="0 0 14 14"><use href="#bulb" x="0" y="0" width="14" height="14"/></svg>
<svg class="a" style="left:377px;top:254.5px;overflow:visible" width="14" height="14" viewBox="0 0 14 14"><use href="#bulb" x="0" y="0" width="14" height="14"/></svg>
<svg class="a" style="left:377px;top:272.5px;overflow:visible" width="14" height="14" viewBox="0 0 14 14"><use href="#bulb" x="0" y="0" width="14" height="14"/></svg>
<svg class="a" style="left:377px;top:290.5px;overflow:visible" width="14" height="14" viewBox="0 0 14 14"><use href="#bulb" x="0" y="0" width="14" height="14"/></svg>
<svg class="a" style="left:377px;top:308.5px;overflow:visible" width="14" height="14" viewBox="0 0 14 14"><use href="#bulb" x="0" y="0" width="14" height="14"/></svg>
<svg class="a" style="left:377px;top:362.5px;overflow:visible" width="14" height="14" viewBox="0 0 14 14"><use href="#bulb" x="0" y="0" width="14" height="14"/></svg>
<div class="a" style="left:361px;top:413px;width:980px;height:1px;background:#c3c3c3;"></div>
<div class="a" style="left:361px;top:414px;width:980px;height:19px;background:#f2f2f2;"></div>
<div class="a" style="left:360px;top:433px;width:981px;height:1px;background:#c3c3c3;"></div>
<svg class="a" style="left:369px;top:415px;overflow:visible" width="12" height="17" viewBox="0 0 12 17"><path d="M1.5 1.5L9 8.5 1.5 15.5" fill="none" stroke="#9d9d9d" stroke-width="2.6"/><path d="M1.5 1.5L9 8.5 1.5 15.5" fill="none" stroke="#f2f2f2" stroke-width="1"/></svg>
<div class="a" style="left:360px;top:438px;width:981px;height:377px;background:#fff;"></div>
<div class="a" style="left:360px;top:438px;width:1px;height:377px;background:#c3c3c3;"></div>
<div class="a" style="left:360px;top:438px;width:981px;height:1px;background:#c3c3c3;"></div>
<div class="a" style="left:361px;top:439px;width:980px;height:26px;background:#d4d4d4;"></div>
<div class="a" style="left:361px;top:439px;width:287px;height:27px;background:#f2f2f2;"></div>
<div class="a" style="left:648px;top:465px;width:693px;height:1px;background:#c8c8c8;"></div>
<div class="t" style="left:366.80px;top:442.84px;font-size:12px;line-height:18px;color:#000;font-family:'Liberation Sans',sans-serif;letter-spacing:0.116px;-webkit-text-stroke:0.15px currentColor">Output - C:\temp\jakartaee-transformed-sample</div>
<svg class="a" style="left:633px;top:448.5px;overflow:visible" width="8" height="8" viewBox="0 0 8 8"><path d="M0.5 0.5L7.5 7.5M7.5 0.5L0.5 7.5" stroke="#7e7e7e" stroke-width="1.15"/></svg>
<div class="a" style="left:361px;top:466px;width:27px;height:349px;background:#f2f2f2;"></div>
<div class="a" style="left:388px;top:466px;width:1px;height:349px;background:#cdcdcd;"></div>
<svg class="a" style="left:396px;top:466px;overflow:visible" width="6" height="300" viewBox="0 0 6 300"><path d="M0.5 0V291.5H5.5" fill="none" stroke="#111" stroke-width="1"/></svg>
<svg class="a" style="left:365px;top:469px;overflow:visible" width="17" height="17" viewBox="0 0 17 17"><path d="M1.5 1.5l7 7-7 7zM8 1.5l7.5 7-7.5 7z" fill="#b2ea94" stroke="#2e9a1a" stroke-width="1.1" stroke-linejoin="round"/></svg>
<svg class="a" style="left:365px;top:493px;overflow:visible" width="17" height="17" viewBox="0 0 17 17"><path d="M1.5 1.5l7 7-7 7zM8 1.5l7.5 7-7.5 7z" fill="#e0df92" stroke="#9a9a2a" stroke-width="1.1" stroke-linejoin="round"/></svg>
<svg class="a" style="left:365px;top:517px;overflow:visible" width="17" height="17" viewBox="0 0 17 17"><path d="M1 6.2h7.5V1.2l7.3 7.3-7.3 7.3v-5H1z" fill="#cbbda8"/></svg>
<svg class="a" style="left:366px;top:542px;overflow:visible" width="16" height="16" viewBox="0 0 16 16"><rect x="4.5" y="0.5" width="11" height="14" fill="#e8eef4" stroke="#52667a"/><path d="M12 2v3M14 2v3" stroke="#52667a"/><circle cx="6" cy="7" r="4.5" fill="#cfe3f3" stroke="#3c4a58" stroke-width="1.2"/><path d="M9.3 10.3l4.2 4.2" stroke="#222" stroke-width="1.8"/></svg>
<svg class="a" style="left:366px;top:566px;overflow:visible" width="16" height="16" viewBox="0 0 16 16"><rect x="0.5" y="0.5" width="14" height="14" fill="#d9bfbf" stroke="#c9aaaa"/><rect x="5" y="5" width="5" height="5" fill="#ece0e0"/></svg>
<svg class="a" style="left:366px;top:590px;overflow:visible" width="16" height="16" viewBox="0 0 16 16"><circle cx="3.3" cy="3.3" r="2.4" fill="none" stroke="#d38a1a" stroke-width="1.2"/><path d="M1.5 13.5l6-6c-0.8-2.5 1.5-5 4.2-4.3l-1.8 1.8 0.5 1.6 1.6 0.5 1.8-1.8c0.7 2.7-1.8 5-4.3 4.2l-6 6z" fill="#e9eef3" stroke="#4b5b6c" stroke-width="1"/><rect x="11" y="11" width="4.5" height="3.5" fill="#e9eef3" stroke="#4b5b6c" stroke-width="0.9"/></svg>
<div class="a" style="left:389px;top:466px;width:952px;height:349px;overflow:hidden">
<div class="t" style="left:21px;top:-4.69px;font-size:12px;letter-spacing:-0.2011px;line-height:17px;font-family:'Liberation Mono',monospace;color:#141414">jul. 25, 2023 8:15:54 P. M. org.eclipse.transformer.Transformer info</div>
<div class="t" style="left:21px;top:12.31px;font-size:12px;letter-spacing:-0.2011px;line-height:17px;font-family:'Liberation Mono',monospace;color:#141414">INFO: Internal [ Substitions matching [ permissions.xml ] ] URL [ jar:file:/C:/Users/alfon/.m2/repository/fish/payara/transformer/fish.payara.transformer.maven</div>
<div class="t" style="left:21px;top:29.31px;font-size:12px;letter-spacing:-0.2011px;line-height:17px;font-family:'Liberation Mono',monospace;color:#141414">jul. 25, 2023 8:15:54 P. M. org.eclipse.transformer.Transformer info</div>
<div class="t" style="left:21px;top:46.31px;font-size:12px;letter-spacing:-0.2011px;line-height:17px;font-family:'Liberation Mono',monospace;color:#141414">INFO: Internal [ Substitions matching [ permissions.xml ] ] URL [ jar:file:/C:/Users/alfon/.m2/repository/fish/payara/transformer/fish.payara.transformer.maven</div>
<div class="t" style="left:21px;top:63.31px;font-size:12px;letter-spacing:-0.2011px;line-height:17px;font-family:'Liberation Mono',monospace;color:#141414">jul. 25, 2023 8:15:54 P. M. org.eclipse.transformer.Transformer info</div>
<div class="t" style="left:21px;top:80.31px;font-size:12px;letter-spacing:-0.2011px;line-height:17px;font-family:'Liberation Mono',monospace;color:#141414">INFO: Text files will be updated</div>
<div class="t" style="left:21px;top:97.31px;font-size:12px;letter-spacing:-0.2011px;line-height:17px;font-family:'Liberation Mono',monospace;color:#141414">jul. 25, 2023 8:15:54 P. M. org.eclipse.transformer.Transformer info</div>
<div class="t" style="left:21px;top:114.31px;font-size:12px;letter-spacing:-0.2011px;line-height:17px;font-family:'Liberation Mono',monospace;color:#141414">INFO: Java direct string updates will not be performed</div>
<div class="t" style="left:21px;top:131.31px;font-size:12px;letter-spacing:-0.2011px;line-height:17px;font-family:'Liberation Mono',monospace;color:#141414">jul. 25, 2023 8:15:54 P. M. org.eclipse.transformer.Transformer info</div>
<div class="t" style="left:21px;top:148.31px;font-size:12px;letter-spacing:-0.2011px;line-height:17px;font-family:'Liberation Mono',monospace;color:#141414">INFO: Per class constant mapping files are not enabled</div>
<div class="t" style="left:21px;top:165.31px;font-size:12px;letter-spacing:-0.2011px;line-height:17px;font-family:'Liberation Mono',monospace;color:#141414">jul. 25, 2023 8:15:54 P. M. org.eclipse.transformer.Transformer info</div>
<div class="t" style="left:21px;top:182.31px;font-size:12px;letter-spacing:-0.2011px;line-height:17px;font-family:'Liberation Mono',monospace;color:#141414">INFO: Action selected for input [ C:/temp/jakartaee-transformed-sample/target/test-classes ]: Directory Action</div>
<div class="t" style="left:21px;top:199.31px;font-size:12px;letter-spacing:-0.2011px;line-height:17px;font-family:'Liberation Mono',monospace;color:#141414">jul. 25, 2023 8:15:54 P. M. org.eclipse.transformer.action.impl.ContainerChangesImpl displayTerse</div>
<div class="t" style="left:21px;top:216.31px;font-size:12px;letter-spacing:-0.2011px;line-height:17px;font-family:'Liberation Mono',monospace;color:#141414">INFO: Input [ {} ] as [ {} ]: {}</div>
<div class="t" style="left:21px;top:233.31px;font-size:12px;letter-spacing:-0.2011px;line-height:17px;font-family:'Liberation Mono',monospace;color:#141414">jul. 25, 2023 8:15:54 P. M. org.eclipse.transformer.action.impl.ContainerChangesImpl displayTerse</div>
<div class="t" style="left:21px;top:250.31px;font-size:12px;letter-spacing:-0.2011px;line-height:17px;font-family:'Liberation Mono',monospace;color:#141414">INFO: [          All Resources ] [      0 ] Unselected [      0 ] Selected [      0 ]</div>
<div class="t" style="left:21px;top:267.31px;font-size:12px;letter-spacing:-0.2011px;line-height:17px;font-family:'Liberation Mono',monospace;color:#141414">jul. 25, 2023 8:15:54 P. M. org.eclipse.transformer.action.impl.ContainerChangesImpl displayTerse</div>
<div class="t" style="left:21px;top:284.31px;font-size:12px;letter-spacing:-0.2011px;line-height:17px;font-family:'Liberation Mono',monospace;color:#141414">INFO: [            All Actions ] [      0 ]  Unchanged [      0 ]  Changed [      0 ]</div>
<div class="a" style="left:21px;top:308px;width:504px;height:1px;background:repeating-linear-gradient(to right,transparent 0,transparent 1px,#1a1a1a 1px,#1a1a1a 6px,transparent 6px,transparent 7px)"></div>
<div class="t" style="left:21px;top:318.31px;font-size:12px;letter-spacing:-0.2011px;line-height:17px;font-family:'Liberation Mono',monospace;color:#2b8a2b">BUILD SUCCESS</div>
<div class="a" style="left:21px;top:342px;width:504px;height:1px;background:repeating-linear-gradient(to right,transparent 0,transparent 1px,#1a1a1a 1px,#1a1a1a 6px,transparent 6px,transparent 7px)"></div>
</div>
</body></html>
